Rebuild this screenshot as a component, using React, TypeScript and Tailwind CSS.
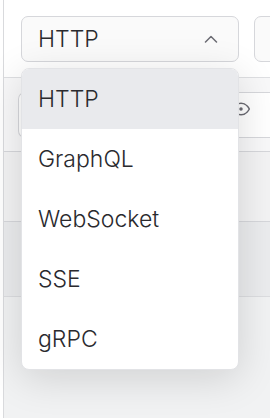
import React from "react";

const items = ["HTTP", "GraphQL", "WebSocket", "SSE", "gRPC"];

export default function App() {
  return (
    <div
      className="relative w-[270px] h-[418px] overflow-hidden bg-white text-[#2a2a2e] font-light"
      style={{ fontFamily: "Inter, 'Noto Sans', sans-serif" }}
    >
      <div className="flex h-full">
        <div className="w-[3px] shrink-0 bg-white" />
        <div className="w-px shrink-0 bg-[#d9dadd]" />
        <div className="flex flex-1 flex-col min-w-0">
          {/* top bar */}
          <div className="flex h-[78px] shrink-0 items-start gap-[15px] pl-[17px] pt-[16px] border-b border-[#dedfe2] bg-white">
            <div className="flex h-[46px] w-[218px] shrink-0 items-center justify-between rounded-[7px] border-[1.5px] border-[#d6d7db] bg-[#fafafa] pl-[16px] pr-[20px]">
              <span className="text-[23px] leading-none">HTTP</span>
              <svg width="14" height="8" viewBox="0 0 14 8" fill="none">
                <path d="M1.5 7 L7 1.5 L12.5 7" stroke="#6b6b73" strokeWidth="1.5" strokeLinecap="round" strokeLinejoin="round" />
              </svg>
            </div>
            <div className="h-[46px] w-[60px] shrink-0 rounded-[7px] border-[1.5px] border-[#d6d7db] bg-[#fafafa]" />
          </div>
          {/* row with input */}
          <div className="flex h-[74px] shrink-0 items-start pl-[14px] pt-[14px] border-b border-[#d6d7db] bg-[#f8f8f9]">
            <div className="flex h-[46px] flex-1 items-start justify-end rounded-l-[7px] border-[1.5px] border-r-0 border-[#d6d7db] bg-white pr-[19px] pt-[6px]">
              <svg width="20" height="20" viewBox="0 0 24 24" fill="none" stroke="#6b6b73" strokeWidth="1.8" strokeLinecap="round" strokeLinejoin="round">
                <path d="M2 12s3.5-7 10-7 10 7 10 7-3.5 7-10 7-10-7-10-7Z" />
                <circle cx="12" cy="12" r="1.2" fill="#6b6b73" />
              </svg>
            </div>
          </div>
          <div className="h-[70px] shrink-0 border-b border-[#d6d7db] bg-[#f3f3f4]" />
          <div className="h-[75px] shrink-0 border-b border-[#dcdde0] bg-[#ebecee]" />
          <div className="flex-1 bg-[#f1f2f3]" />
        </div>
      </div>

      {/* dropdown menu */}
      <div className="absolute left-[21px] top-[68px] w-[218px] overflow-hidden rounded-[8px] border border-[#e2e3e6] bg-white shadow-[0_8px_40px_rgba(0,0,0,0.14)]">
        {items.map((it, i) => (
          <div
            key={it}
            className={
              i === 0
                ? "flex h-[60px] items-center bg-[#e9eaed] pl-[16px] text-[23px]"
                : "flex h-[60px] items-center pl-[16px] text-[23px]"
            }
          >
            {it}
          </div>
        ))}
      </div>
    </div>
  );
}
